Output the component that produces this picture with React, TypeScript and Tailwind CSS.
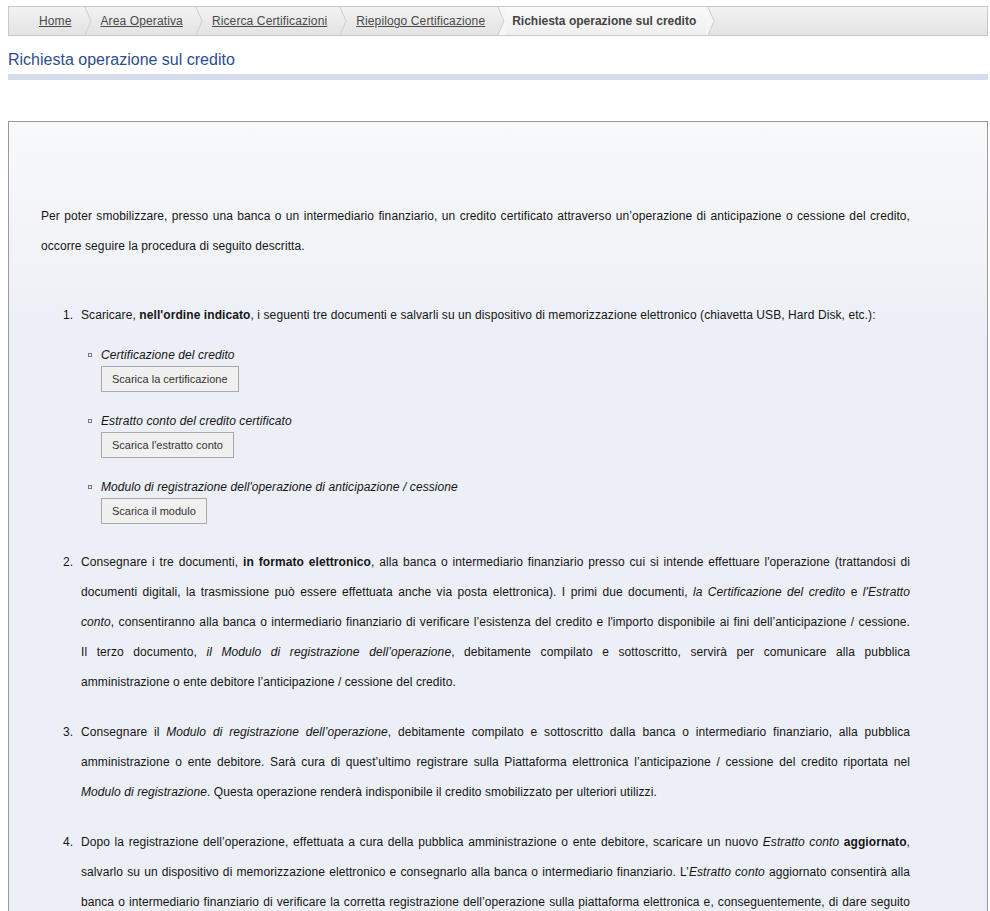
const crumbs = ["Home", "Area Operativa", "Ricerca Certificazioni", "Riepilogo Certificazione"];

function Chevron({ fill }: { fill?: "left" | "right" }) {
  return (
    <svg width="10" height="28" viewBox="0 0 10 28" className="shrink-0">
      {fill === "right" && <polygon points="2,0 10,0 10,28 2,28 8,14" fill="#f6f6f6" />}
      {fill === "left" && <polygon points="0,0 2,0 8,14 2,28 0,28" fill="#f6f6f6" />}
      <polyline points="2,0 8,14 2,28" fill="none" stroke="#cfcfcf" strokeWidth="1" />
    </svg>
  );
}

function Breadcrumb() {
  return (
    <nav className="flex h-[30px] w-[980px] items-stretch border border-[#c9c9c9] bg-gradient-to-b from-[#f2f2f2] to-[#e3e3e3] text-[12px] leading-[28px]">
      {crumbs.map((c, i) => (
        <div key={c} className="flex items-stretch">
          <a
            href="#"
            className={`${i === 0 ? "pl-[30px]" : "pl-[8px]"} pr-[11px] tracking-[0.12px] text-[#4a4a4a] underline`}
          >
            {c}
          </a>
          <Chevron fill={i === crumbs.length - 1 ? "right" : undefined} />
        </div>
      ))}
      <span className="bg-gradient-to-b from-[#fafafa] to-[#efefef] pl-[6px] pr-[10px] font-bold text-[#444]">
        Richiesta operazione sul credito
      </span>
      <Chevron fill="left" />
    </nav>
  );
}

const docs = [
  { label: "Certificazione del credito", btn: "Scarica la certificazione" },
  { label: "Estratto conto del credito certificato", btn: "Scarica l'estratto conto" },
  { label: "Modulo di registrazione dell'operazione di anticipazione / cessione", btn: "Scarica il modulo" },
];

function Item({ n, children, last }: { n: number; children: React.ReactNode; last?: boolean }) {
  return (
    <li className={`flex ${last ? "" : "mb-[20px]"}`}>
      <span className="w-[18px] shrink-0">{n}.</span>
      <div className="min-w-0 flex-1">{children}</div>
    </li>
  );
}

export default function App() {
  return (
    <div className="min-h-screen bg-white pl-[8px] pt-[6px] font-['Liberation_Sans',Arial,sans-serif] text-[#151515]">
      <Breadcrumb />
      <h1 className="mt-[14px] text-[16px] leading-[20px] text-[#2c4d8e]">Richiesta operazione sul credito</h1>
      <div className="mt-[4px] h-[6px] w-[980px] bg-[#d5dcec]" />

      <div className="mt-[41px] w-[980px] border border-[#9a9a9a] bg-[linear-gradient(to_bottom,#f8f9fb_0px,#eceff6_220px)] pb-[40px] pl-[32px] pr-[77px] pt-[79px] text-[12px] leading-[30px] tracking-[0.085px]">
        <p className="text-justify">
          Per poter smobilizzare, presso una banca o un intermediario finanziario, un credito certificato attraverso
          un’operazione di anticipazione o cessione del credito, occorre seguire la procedura di seguito descritta.
        </p>

        <ol className="mt-[39px] pl-[22px] text-justify">
          <Item n={1}>
            <p>
              Scaricare, <b>nell'ordine indicato</b>, i seguenti tre documenti e salvarli su un dispositivo di
              memorizzazione elettronico (chiavetta USB, Hard Disk, etc.):
            </p>
            <ul className="mb-[3px] mt-[16px] pl-[7px]">
              {docs.map((d, i) => (
                <li key={d.btn} className={`flex ${i === docs.length - 1 ? "" : "mb-[20px]"}`}>
                  <span className="mt-[7px] h-[4px] w-[4px] shrink-0 border border-[#777]" />
                  <div className="pl-[9px]">
                    <div className="italic leading-[18px]">{d.label}</div>
                    <button className="mt-[2px] block h-[26px] border border-[#a9a9a9] bg-[#f0f0f0] px-[10px] text-[11px] leading-[24px] tracking-normal text-[#333]">
                      {d.btn}
                    </button>
                  </div>
                </li>
              ))}
            </ul>
          </Item>
          <Item n={2}>
            Consegnare i tre documenti, <b>in formato elettronico</b>, alla banca o intermediario finanziario presso
            cui si intende effettuare l'operazione (trattandosi di documenti digitali, la trasmissione può essere
            effettuata anche via posta elettronica). I primi due documenti, <i>la Certificazione del credito</i> e{" "}
            <i>l'Estratto conto</i>,{"\u00a0"}consentiranno alla banca o intermediario finanziario di verificare
            l’esistenza del credito e l'importo disponibile ai fini dell’anticipazione / cessione. Il{"\u00a0"}terzo
            documento, <i>il Modulo di registrazione dell’operazione</i>, debitamente compilato e sottoscritto, servirà
            per comunicare alla pubblica amministrazione{"\u00a0"}o{"\u00a0"}ente debitore l’anticipazione / cessione
            del credito.
          </Item>
          <Item n={3}>
            Consegnare il <i>Modulo di registrazione dell’operazione</i>, debitamente compilato e sottoscritto dalla
            banca o intermediario finanziario, alla pubblica amministrazione o ente debitore. Sarà cura di
            quest’ultimo registrare sulla Piattaforma elettronica l’anticipazione / cessione del credito riportata nel{" "}
            <i>Modulo di registrazione</i>. Questa operazione renderà indisponibile il credito smobilizzato per
            ulteriori utilizzi.
          </Item>
          <Item n={4} last>
            Dopo la registrazione dell’operazione, effettuata a cura della pubblica amministrazione o ente debitore,
            scaricare un nuovo <i>Estratto conto</i> <b>aggiornato</b>, salvarlo su un dispositivo di memorizzazione
            elettronico e consegnarlo alla banca o intermediario finanziario. L’<i>Estratto conto</i> aggiornato
            consentirà alla banca o intermediario finanziario di verificare la corretta registrazione dell’operazione
            sulla piattaforma elettronica e, conseguentemente, di dare seguito all’operazione di anticipazione /
            cessione del credito.
          </Item>
        </ol>
      </div>
    </div>
  );
}
